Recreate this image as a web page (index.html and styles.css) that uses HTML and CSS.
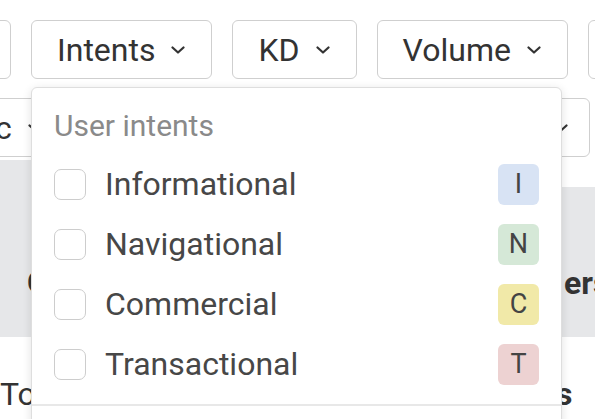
FILE: index.html
```html
<!DOCTYPE html>
<html lang="en">
<head>
  <meta charset="UTF-8">
  <title>Keyword filters</title>
  <link rel="stylesheet" href="styles.css">
</head>
<body>

<div class="page">
  <div class="toolbar toolbar-top">
    <button class="filter filter-cut"></button>
    <div class="filter-wrap">
      <button class="filter">Intents
        <svg class="chevron" viewBox="0 0 14 8"><path d="M1.5 1.5 L7 6.5 L12.5 1.5"/></svg>
      </button>

      <div class="dropdown">
        <div class="dropdown-title">User intents</div>
        <ul class="intent-list">
          <li class="intent">
            <span class="checkbox"></span>
            <span class="intent-name">Informational</span>
            <span class="badge badge-i">I</span>
          </li>
          <li class="intent">
            <span class="checkbox"></span>
            <span class="intent-name">Navigational</span>
            <span class="badge badge-n">N</span>
          </li>
          <li class="intent">
            <span class="checkbox"></span>
            <span class="intent-name">Commercial</span>
            <span class="badge badge-c">C</span>
          </li>
          <li class="intent">
            <span class="checkbox"></span>
            <span class="intent-name">Transactional</span>
            <span class="badge badge-t">T</span>
          </li>
        </ul>
        <div class="dropdown-footer"></div>
      </div>
    </div>
    <button class="filter">KD
      <svg class="chevron" viewBox="0 0 14 8"><path d="M1.5 1.5 L7 6.5 L12.5 1.5"/></svg>
    </button>
    <button class="filter">Volume
      <svg class="chevron" viewBox="0 0 14 8"><path d="M1.5 1.5 L7 6.5 L12.5 1.5"/></svg>
    </button>
    <button class="filter filter-cut"></button>
  </div>

  <div class="toolbar toolbar-second">
    <button class="filter filter-left">Generic
      <svg class="chevron" viewBox="0 0 14 8"><path d="M1.5 1.5 L7 6.5 L12.5 1.5"/></svg>
    </button>
    <button class="filter filter-right">
      <svg class="chevron" viewBox="0 0 14 8"><path d="M1.5 1.5 L7 6.5 L12.5 1.5"/></svg>
    </button>
  </div>

  <div class="results">
    <div class="results-head">
      <div class="cell cell-left head-left">C</div>
      <div class="cell head-right">ers</div>
    </div>
    <div class="results-row">
      <div class="cell cell-left">To</div>
      <div class="cell row-right">s</div>
    </div>
  </div>
</div>

</body>
</html>
```

FILE: styles.css
```css
* {
  box-sizing: border-box;
  font-family: Roboto, "Liberation Sans", sans-serif;
}

html, body {
  margin: 0;
  padding: 0;
  width: 595px;
  height: 419px;
  overflow: hidden;
  background-color: #fff;
  color: #333;
}

.page {
  padding-top: 20px;
}

.toolbar {
  display: flex;
  gap: 20px;
}

.toolbar-top {
  margin-left: -109px;
}

.filter {
  flex-shrink: 0;
  display: flex;
  align-items: center;
  gap: 16px;
  height: 59px;
  padding: 0 26px 0 25px;
  font-size: 32px;
  color: #333;
  background-color: #fff;
  border: 1px solid #cfcfcf;
  border-radius: 6px;
  white-space: nowrap;
}

.filter-cut {
  width: 120px;
}

.chevron {
  width: 14px;
  height: 8px;
  fill: none;
  stroke: #333;
  stroke-width: 2.2;
  stroke-linecap: round;
  stroke-linejoin: round;
}

.filter-wrap {
  position: relative;
  flex-shrink: 0;
}

/* 드롭다운 */
.dropdown {
  position: absolute;
  top: 67px;
  left: 0;
  z-index: 10;
  width: 531px;
  padding: 18px 0 0;
  background-color: #fff;
  border: 1px solid #dedede;
  border-radius: 6px;
  box-shadow: 0 2px 10px rgba(0, 0, 0, 0.12);
}

.dropdown-title {
  padding: 0 22px;
  margin-bottom: 8px;
  font-size: 30px;
  line-height: 40px;
  color: #8a8a8a;
}

.intent-list {
  list-style: none;
  margin: 0;
  padding: 0 22px 10px;
}

.intent {
  display: flex;
  align-items: center;
  height: 60px;
}

.checkbox {
  width: 32px;
  height: 31px;
  border: 1.5px solid #cdcdcd;
  border-radius: 7px;
  background-color: #fff;
  margin-right: 19px;
}

.intent-name {
  flex: 1;
  font-size: 32px;
  color: #474747;
}

.badge {
  width: 41px;
  height: 41px;
  border-radius: 6px;
  display: flex;
  justify-content: center;
  align-items: center;
  font-size: 27px;
  color: #444;
}

.badge-i { background-color: #d8e3f4; }
.badge-n { background-color: #d5e8d7; }
.badge-c { background-color: #f1e9a8; }
.badge-t { background-color: #edd2d2; }

.dropdown-footer {
  height: 80px;
  border-top: 2px solid #e8e8e8;
}

.toolbar-second {
  margin-top: 19px;
  justify-content: space-between;
}

.filter-left {
  margin-left: -123px;
}

.filter-right {
  width: 120px;
  margin-right: 5px;
  justify-content: flex-end;
  padding-right: 21px;
}

/* 결과 테이블 */
.results {
  margin-top: 3px;
}

.results-head {
  display: flex;
  height: 177px;
}

.cell {
  font-size: 32px;
  white-space: nowrap;
}

.cell-left {
  width: 200px;
  flex-shrink: 0;
}

.head-left {
  background-color: #e6e7e9;
  padding: 104px 0 0 27px;
  font-weight: bold;
  line-height: 36px;
}

.head-right {
  flex: 1;
  margin-top: 27px;
  background-color: #e6e7e9;
  padding: 78px 0 0 364px;
  font-weight: bold;
  line-height: 36px;
}

.results-row {
  display: flex;
  height: 90px;
  padding-top: 39px;
  line-height: 36px;
}

.row-right {
  padding-left: 356px;
  font-weight: bold;
}
```
